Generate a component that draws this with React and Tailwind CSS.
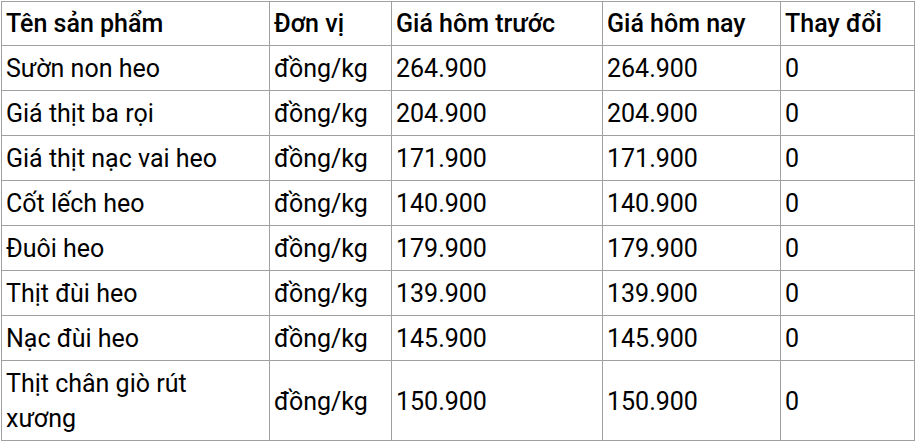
const rows = [
  ["Sườn non heo", "đồng/kg", "264.900", "264.900", "0"],
  ["Giá thịt ba rọi", "đồng/kg", "204.900", "204.900", "0"],
  ["Giá thịt nạc vai heo", "đồng/kg", "171.900", "171.900", "0"],
  ["Cốt lếch heo", "đồng/kg", "140.900", "140.900", "0"],
  ["Đuôi heo", "đồng/kg", "179.900", "179.900", "0"],
  ["Thịt đùi heo", "đồng/kg", "139.900", "139.900", "0"],
  ["Nạc đùi heo", "đồng/kg", "145.900", "145.900", "0"],
  ["Thịt chân giò rút xương", "đồng/kg", "150.900", "150.900", "0"],
];

const headers = ["Tên sản phẩm", "Đơn vị", "Giá hôm trước", "Giá hôm nay", "Thay đổi"];

export default function App() {
  return (
    <div className="min-h-screen bg-white pt-[1px] pl-[1px]">
      <table
        className="table-fixed border-collapse w-[914px] text-[25px] leading-[35px] text-black"
        style={{ fontFamily: "Roboto, 'Noto Sans', sans-serif" }}
      >
        <colgroup>
          <col className="w-[268px]" />
          <col className="w-[122px]" />
          <col className="w-[211px]" />
          <col className="w-[178px]" />
          <col className="w-[134px]" />
        </colgroup>
        <thead>
          <tr>
            {headers.map((h) => (
              <th
                key={h}
                className="border border-[#a0a0a0] pl-[4px] pr-[8px] pt-[4px] pb-[4px] text-left align-middle font-medium"
              >
                {h}
              </th>
            ))}
          </tr>
        </thead>
        <tbody>
          {rows.map((r) => (
            <tr key={r[0]}>
              {r.map((c, i) => (
                <td
                  key={i}
                  className="border border-[#a0a0a0] pl-[4px] pr-[8px] pt-[5px] pb-[4px] text-left align-middle font-normal"
                >
                  {c}
                </td>
              ))}
            </tr>
          ))}
        </tbody>
      </table>
    </div>
  );
}
